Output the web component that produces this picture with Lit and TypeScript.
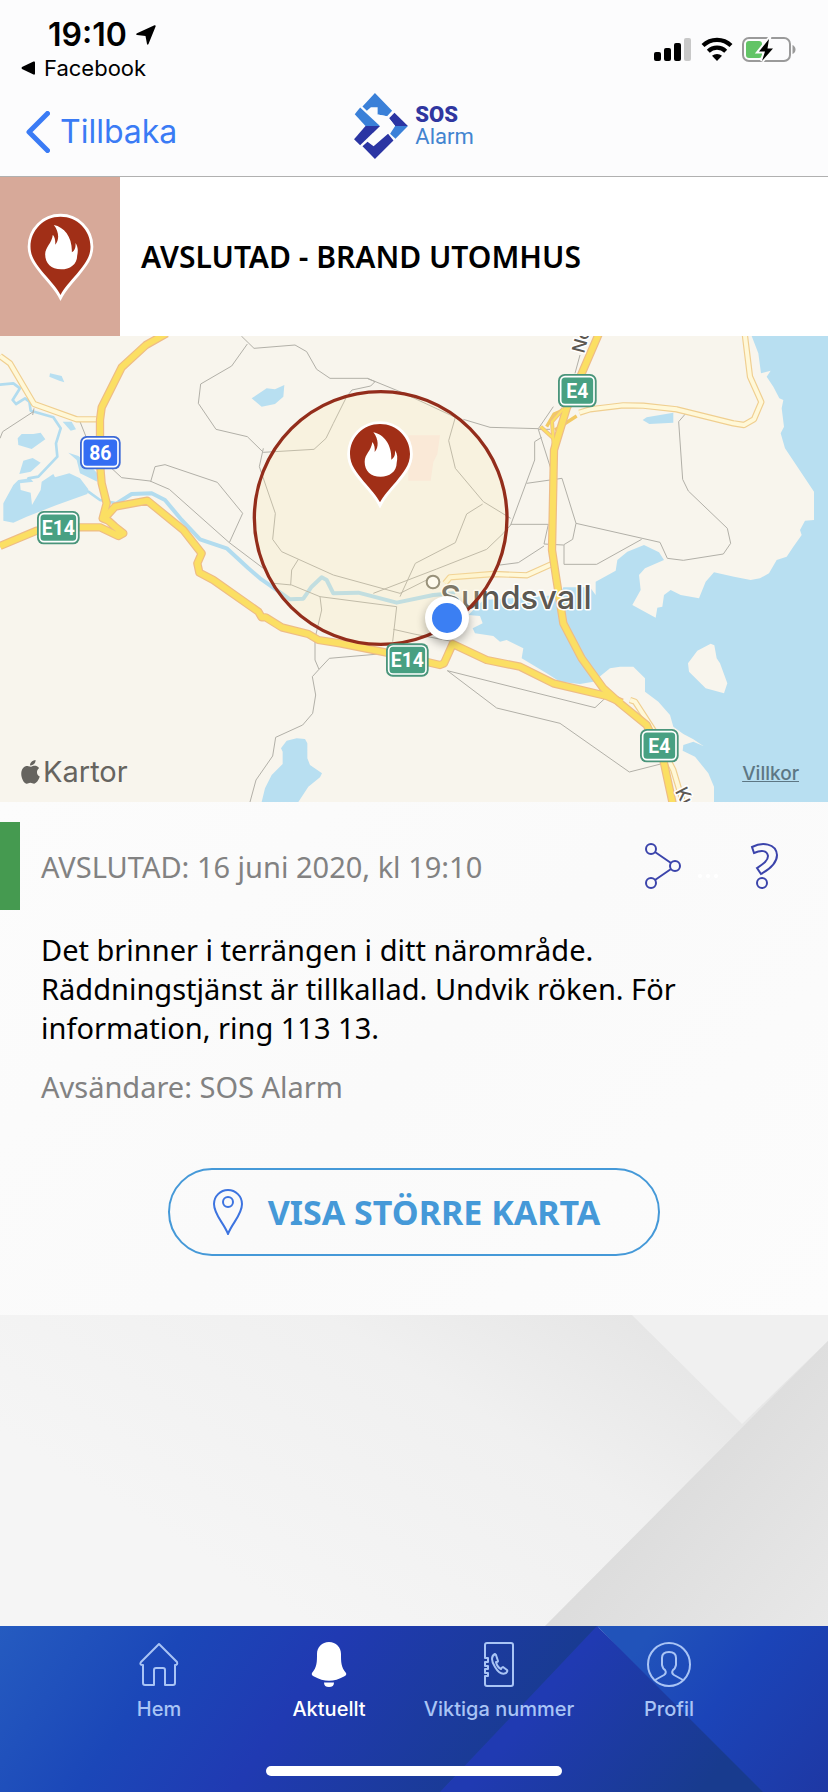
import { LitElement, html, css, svg } from "lit";
import { customElement, property } from "lit/decorators.js";

const firePin = svg`
  <path d="M100 17C50 17 10 57 10 107C10 140 30 163 52 190C72 213 90 233 100 252C110 233 128 213 148 190C170 163 190 140 190 107C190 57 150 17 100 17Z"
    fill="#a12f17" stroke="#fff" stroke-width="17" stroke-miterlimit="8" paint-order="stroke"></path>
  <path d="M80 42C112 48 136 80 134 124C144 118 146 108 145 96C153 108 153 120 150 134C150 160 128 175 102 175C72 175 54 157 54 130C54 107 74 98 77 71C84 80 85 90 84 101C97 88 96 62 80 42Z" fill="#fff"></path>`;

@customElement("status-bar")
export class StatusBar extends LitElement {
  static styles = css`
    :host { display: flex; justify-content: space-between; padding: 18px 32px 0 21px; color: #000; }
    .time { display: flex; align-items: center; gap: 9px; padding-left: 27px; font-size: 32px; line-height: 34px; font-weight: 600; }
    .app { display: flex; align-items: center; gap: 9px; margin-top: 2px; font-size: 22px; line-height: 28px; color: #000; text-decoration: none; }
    .signals { display: flex; align-items: flex-start; gap: 9px; padding-top: 19px; }
    svg { display: block; }
  `;
  render() {
    return html`
      <div>
        <div class="time">
          <span>19:10</span>
          <svg width="20" height="20" viewBox="0 0 20 20"><path d="M18.5 0.3Q20 0 19.6 1.5L12.5 19Q11.6 20.6 11 19L9.500 11L1 10Q-.6 9.200 1 8.300Z"></path></svg>
        </div>
        <a class="app" href="#facebook">
          <svg width="14" height="14" viewBox="0 0 14 14"><path d="M1 6Q0 7 1 8L12.500 13.500Q14 14 14 12.500V1.500Q14 0 12.500 .5Z"></path></svg>
          <span>Facebook</span>
        </a>
      </div>
      <div class="signals">
        <svg width="38" height="25" viewBox="0 0 38 25">
          <rect x="0" y="15" width="7" height="9" rx="2"></rect><rect x="10" y="11" width="7" height="13" rx="2"></rect>
          <rect x="20" y="6" width="7" height="18" rx="2"></rect><rect x="30" y="1" width="7" height="23" rx="2" fill="#c8c8c8"></rect>
        </svg>
        <svg width="32" height="25" viewBox="0 0 32 25" fill="none" stroke="#000" stroke-width="4.200">
          <path d="M2 8.500A20 20 0 0 1 30 8.500"></path><path d="M7.300 14.200A12.500 12.500 0 0 1 24.700 14.200"></path>
          <path d="M11 18.800A7.500 7.500 0 0 1 21 18.800L16 24Z" fill="#000" stroke="none"></path>
        </svg>
        <svg width="54" height="26" viewBox="0 0 54 26">
          <rect x="1" y="1" width="47" height="23" rx="6" fill="none" stroke="#9a9a9a" stroke-width="2"></rect>
          <rect x="4" y="4" width="16" height="17" rx="3" fill="#62c466"></rect>
          <path d="M50.500 8Q53.500 9.500 53.500 12.500T50.500 17Z" fill="#9a9a9a"></path>
          <path d="M27 2L17 14.500H23L20 24L31 11.500H25.500Z" stroke="#fcfcfc" stroke-width="4" paint-order="stroke"></path>
        </svg>
      </div>`;
  }
}

@customElement("nav-header")
export class NavHeader extends LitElement {
  static styles = css`
    :host { display: grid; grid-template-columns: 1fr auto 1fr; align-items: center; padding: 11px 26px 5px; border-bottom: 1px solid #b0b0b0; }
    .back { justify-self: start; display: flex; align-items: center; gap: 10px; padding: 0; border: 0; background: none; color: #3a7bf5; font: 400 32px/44px Inter, sans-serif; }
    .brand { display: flex; align-items: center; gap: 7px; padding-bottom: 12px; font-family: Roboto, sans-serif; }
    .name { display: flex; flex-direction: column; font-size: 22px; line-height: 22px; color: #4284d0; }
    .name strong { font-weight: 900; color: #3036a0; }
    svg { display: block; }
  `;
  render() {
    return html`
      <button class="back">
        <svg width="24" height="42" viewBox="0 0 24 42" fill="none" stroke="#3a7bf5" stroke-width="5" stroke-linecap="round" stroke-linejoin="round"><path d="M21.500 2.500L3 21L21.500 39.500"></path></svg>
        <span>Tillbaka</span>
      </button>
      <div class="brand">
        <svg width="54" height="66" viewBox="0 0 160 196">
          <g fill="#3a80d8">
            <path d="M62 0L113 53L98 69L70 64V42H50L38 53L25 40Z"></path>
            <path d="M18 43L77 98H34L2 63Z"></path>
            <path d="M108 98H160L123 136L107 121Z"></path>
          </g>
          <g fill="#2b35a3">
            <path d="M120 59L160 98H122L104 75Z"></path>
            <path d="M34 98H77L18 155L0 137Z"></path>
            <path d="M101 121L117 141L62 196L25 158L40 145L58 158Z"></path>
          </g>
          <path d="M98 69L70 64L74 92L77 98L52 126L60 145L90 121L101 121L107 121L122 98L104 75Z" fill="#fcfcfd"></path>
          <path d="M48 98H77L55 119Z" fill="#2b35a3"></path>
        </svg>
        <div class="name"><strong>SOS</strong><span>Alarm</span></div>
      </div>`;
  }
}

@customElement("event-map")
export class EventMap extends LitElement {
  static styles = css`
    :host { display: block; position: relative; }
    .map { display: block; width: 100%; height: auto; }
    .label { font-family: Inter, sans-serif; font-weight: 500; fill: #5c5852; stroke: #fff; stroke-width: 9px; paint-order: stroke; stroke-linejoin: round; }
    .city { font-size: 98px; }
    .street { font-size: 54px; }
    .code { font: 700 58px "Liberation Sans Narrow", Roboto, sans-serif; fill: #fff; text-anchor: middle; }
    .maker { position: absolute; left: 21px; bottom: 12px; display: flex; align-items: center; gap: 3px; color: #66645f; font-size: 29px; line-height: 36px; }
    .terms { position: absolute; right: 29px; bottom: 16px; color: #5d7784; font-size: 19px; line-height: 24px; font-weight: 500; }
  `;

  private shield(x: number, y: number, w: number, code: string, fill: string, edge: string) {
    return svg`
      <rect x=${x} y=${y} width=${w} height="100" rx="20" fill=${edge}></rect>
      <rect x=${x + 8} y=${y + 8} width=${w - 16} height="84" rx="13" fill=${fill} stroke="#fff" stroke-width="5"></rect>
      <text class="code" x=${x + w / 2} y=${y + 71}>${code}</text>`;
  }

  render() {
    const roads = [
      "M500 10L438 45L365 112L305 232L300 270V400L305 460L320 520L308 565L325 572L345 590L370 610L355 618L300 592H230L110 602L0 648",
      "M318 560L345 530L442 512L550 600L605 670L592 700L598 728L640 750L775 845L785 862L797 862L845 892L925 912L955 930L1020 940L1160 968L1320 1005L1332 1000L1358 942L1460 990L1560 1010L1660 1060L1820 1098L1866 1118",
      "M1797 10L1700 235L1662 360L1656 660L1668 740L1690 880L1745 985L1810 1075L1860 1120L1940 1185L1990 1290L2018 1420",
      "M1662 360L1656 275L1690 236",
      "M1660 325L1622 290",
    ];
    const pale = [
      "M0 78L30 100L102 222L230 268H290",
      "M1660 700L1580 736L1480 732L1350 742L1335 760",
      "M1738 248L1770 238L1870 226L1930 227L2030 238L2200 280L2232 285L2262 268L2284 216L2250 140L2234 10",
      "M1890 1110L1905 1115L1960 1200L2020 1320L2050 1420",
    ];
    return html`
      <svg class="map" viewBox="0 18 2484 1398" role="img" aria-label="Karta över Sundsvall">
        <defs>
          <filter id="soft" x="-50%" y="-50%" width="200%" height="200%"><feGaussianBlur stdDeviation="14"></feGaussianBlur></filter>
        </defs>
        <rect x="0" y="18" width="2484" height="1398" fill="#f8f5ed"></rect>
        <path d="M1242 316L1320 316L1312 372L1300 396L1292 452H1225V316Z" fill="#fae9e3"></path>
        <g fill="#b8dff1">
          <path d="M2255 18L2275 70L2283 130L2312 122L2300 140L2320 170L2338 205L2350 210L2345 235L2352 290L2342 310L2355 355L2442 485V570L2415 572L2400 600L2405 615L2380 650L2360 680L2330 690L2307 730L2280 745L2252 750L2202 740L2142 727L2117 755L2097 805L2042 795L2012 780L1992 795L1987 830L1972 833L1967 863L1897 825L1922 780L1917 735L1935 715L1992 690L1977 667L1932 645L1882 665L1852 690L1847 722L1787 755V795L1770 772H1690L1680 795L1450 810L1405 855L1440 858L1448 880L1418 895L1425 910L1480 918L1500 935L1520 930L1570 955L1565 985L1640 1030L1680 1055L1740 1062L1780 1055L1830 1015L1860 1010H1900L1935 1045V1085L1975 1115L2010 1155L2020 1190L2050 1212L2080 1228L2110 1248L2080 1235L2050 1245L2048 1262L2085 1280L2125 1330L2142 1370V1416H2484V18Z"></path>
          <path d="M785 1416L795 1375L815 1335L848 1302V1265L843 1255L860 1232L890 1225L915 1227L922 1240V1285L930 1305L966 1330L960 1342L925 1370L895 1416Z"></path>
          <path d="M755 205L800 175L825 178L853 165L850 200L825 222L785 230Z"></path>
          <path d="M150 130L185 138L193 157L178 152L148 140Z"></path>
          <path d="M188 275L215 275L228 298L212 302Z"></path>
          <path d="M53 325L65 312H100L122 308L136 328L95 357L55 345Z"></path>
          <path d="M70 392L98 384L122 398L92 425L58 432Z"></path>
          <path d="M205 368L235 378L262 398L292 430V455L240 430L230 390Z"></path>
          <path d="M10 520L40 465L55 450L90 445L100 455L60 460L62 480L92 488L96 525L122 480L125 455L160 432L165 442L208 430L240 445L265 478L262 492L170 525L80 560L40 578L10 572Z"></path>
          <path d="M1928 270L1940 262L2020 248L2020 278L1948 282Z"></path>
        </g>
        <path d="M2132 941L2143 946L2150 985L2160 1000L2182 1060L2172 1090L2117 1075L2067 1025L2064 1000L2092 962Z" fill="#f8f5ed"></path>
        <g fill="none" stroke="#b2dcef" stroke-linejoin="round" stroke-linecap="round">
          <path stroke-width="8" d="M0 164L40 160L60 175L38 210L48 222L75 205L88 215L92 242L160 262L182 295L168 340L172 380L115 440L85 445M265 485L300 510L350 520"></path>
          <path stroke-width="12" d="M350 520L395 492L455 490L495 510L545 570L600 628L680 655L745 715L780 745L870 808L910 806L935 770L965 742L980 750L1000 790L1075 788L1190 818L1300 795L1360 790"></path>
        </g>
        <g fill="none" stroke="#b2b0a8" stroke-width="3">
          <path d="M724 18L762 55L885 45L920 65L950 118L990 145H1102L1125 155L1112 168L1056 180L1040 200L1000 280L978 325L942 358L790 367L742 320L648 298L595 220L602 162L695 108L742 42M1102 145L1200 185L1366 262"></path>
          <path d="M0 325L8 305L100 245M102 235L98 255M240 275L262 330M335 415L365 443L450 453L508 478L688 638L728 550L652 457L495 404L465 410L452 455M688 638L790 715"></path>
          <path d="M790 355L778 410L826 550L818 628L845 665L1000 735L1200 790L1300 740M895 688L875 720L872 765M822 760L875 765L960 800L1190 830L1178 935M960 800L965 840L945 925V990L957 1018L988 985L1160 970M957 1018L937 1040L947 1095L938 1150L908 1185L827 1222L818 1278L768 1350L750 1416"></path>
          <path d="M1366 262L1346 332L1366 415L1450 515L1532 565M1390 268L1470 292L1615 296L1660 230M1650 298H1615L1660 440M1625 322L1604 335V390L1532 585L1510 610L1460 658L1310 717L1120 790M1448 522L1400 552L1366 638L1246 700L1200 800M1580 460L1686 445L1728 580L1718 628L1690 645L1632 642L1645 583H1532M1632 648L1555 698L1500 705M1692 645V703H1790L1925 628M1728 580L1980 637L2002 685L2050 691L2170 672L2192 640L2182 595L2065 483L2048 448L2036 275L2062 245M1740 75L1725 130"></path>
          <path d="M1342 1022L1785 1133L1815 1105M1342 1022L1490 1134L1680 1180L1888 1326L1990 1300M1180 898L1242 912L1360 935"></path>
        </g>
        <g fill="none" stroke-linejoin="round">
          ${pale.map((d) => svg`<path d=${d} stroke="#f0cf90" stroke-width="19"></path>`)}
          ${pale.map((d) => svg`<path d=${d} stroke="#fff8d8" stroke-width="12"></path>`)}
          <path d="M1640 290L1662 252L1690 240M1665 300L1730 258" stroke="#f2c964" stroke-width="10"></path>
          ${roads.map((d, i) => svg`<path d=${d} stroke="#eebc85" stroke-width=${i < 3 ? 25 : 12}></path>`)}
          ${roads.map((d, i) => svg`<path d=${d} stroke="#fbdf63" stroke-width=${i < 3 ? 18 : 7}></path>`)}
        </g>
        <circle cx="1299" cy="756" r="19" fill="#fff" stroke="#7d796c" stroke-width="6"></circle>
        <text class="label city" x="1320" y="836">Sundsvall</text>
        <text class="label street" transform="translate(1752 72) rotate(-75)">No</text>
        <text class="label street" transform="translate(2024 1384) rotate(62)">Ku</text>
        <circle cx="1142" cy="564" r="379" fill="#fbe9ac" fill-opacity=".22" stroke="#932d1b" stroke-width="10"></circle>
        ${this.shield(240, 318, 122, "86", "#346df3", "#3c69d6")}
        ${this.shield(111, 543, 128, "E14", "#48a082", "#4a957b")}
        ${this.shield(1158, 940, 128, "E14", "#48a082", "#4a957b")}
        ${this.shield(1674, 132, 116, "E4", "#48a082", "#4a957b")}
        ${this.shield(1920, 1197, 116, "E4", "#48a082", "#4a957b")}
        <g transform="translate(1040 265)">${firePin}</g>
        <circle cx="1341" cy="876" r="66" fill="#000" opacity=".3" filter="url(#soft)"></circle>
        <circle cx="1341" cy="864" r="66" fill="#fff"></circle>
        <circle cx="1341" cy="864" r="45" fill="#3b7ff3"></circle>
      </svg>
      <div class="maker">
        <svg width="19" height="24" viewBox="0 0 57 74" fill="#66645f"><path d="M27 17C27 8 34 1 44 0C45 9 37 17 27 17ZM30 21C36 18 47 14 55 25C46 32 46 46 57 51C54 61 47 72 40 73C35 73 33 70 28 70S20 74 16 73C7 71 0 55 0 43C0 24 13 16 22 19Z"></path></svg>
        <span>Kartor</span>
      </div>
      <a class="terms" href="#villkor">Villkor</a>`;
  }
}

@customElement("tab-item")
export class TabItem extends LitElement {
  @property() label = "";
  @property() icon = "";
  @property({ type: Boolean }) active = false;
  static styles = css`
    a { display: flex; flex-direction: column; align-items: center; gap: 10px; color: #a9c4f5; font-size: 20px; line-height: 24px; font-weight: 500; text-decoration: none; white-space: nowrap; }
    .active { color: #fff; }
    svg { display: block; fill: none; stroke: currentColor; stroke-width: 2; stroke-linejoin: round; stroke-linecap: round; }
    .solid { fill: currentColor; stroke: none; }
  `;
  private glyphs: Record<string, unknown> = {
    home: svg`<path d="M22 2L40 20Q41 23 38 23V41Q38 43 36 43H28V28Q28 26 26 26H19Q17 26 17 28V43H8Q6 43 6 41V23Q2 23 4 20Z"></path>`,
    bell: svg`<g class="solid"><path d="M22 0C29 0 34 5 34 12C34 20 34 25 39 31Q40 33 37 34.500Q22 43 7 34.500Q4 33 5 31C10 25 10 20 10 12C10 5 15 0 22 0Z"></path><path d="M17 40.500H27Q27 45 22 45T17 40.500Z"></path></g>`,
    book: svg`<path d="M8 13V3Q8 1 10 1H34Q36 1 36 3V42Q36 44 34 44H10Q8 44 8 42V34H11V31H8V27H11V24H8V20H11V16H8Z"></path><path d="M18 12C14 14 14 19 18 25C21 30 25 33 29 31Q31 29 30 28L26 25Q25 25 24 27Q20 25 19 20Q21 20 21 19L19 13Z"></path>`,
    person: svg`<ellipse cx="22" cy="22.500" rx="21" ry="21.500"></ellipse><path d="M8 38L17 33Q20 31 18 28Q16 27 15 23V16C15 11 18 10 22 10S29 11 29 16V23Q28 27 26 28Q24 31 27 33L36 38"></path>`,
  };
  render() {
    return html`<a class=${this.active ? "active" : ""} href="#${this.icon}">
      <svg width="44" height="45" viewBox="0 0 44 45">${this.glyphs[this.icon]}</svg><span>${this.label}</span></a>`;
  }
}

@customElement("app-root")
export class AppRoot extends LitElement {
  static styles = css`
    :host { display: flex; flex-direction: column; min-height: 100vh; background: #fcfcfd; font-family: Inter, sans-serif; color: #000; }
    svg { display: block; }
    .event { display: flex; align-items: stretch; background: #fff; font-family: "Noto Sans", sans-serif; }
    .badge { display: flex; align-items: center; justify-content: center; width: 120px; height: 159px; background: #d7a999; }
    .event h1 { margin: 0; align-self: center; padding-left: 21px; font-size: 30px; line-height: 40px; font-weight: 600; }
    .details { display: flex; flex-direction: column; padding: 20px 0 59px; background: linear-gradient(135deg, #fcfcfc, #fafafa 50%, #fcfcfc); font-family: "Noto Sans", sans-serif; font-size: 29px; line-height: 39px; }
    .state { display: flex; align-items: center; height: 88px; padding-right: 47px; border-left: 20px solid #459a50; color: #828282; }
    .state time { flex: 1; padding-left: 21px; }
    .tools { display: flex; align-items: center; gap: 12px; }
    .tool { padding: 0; border: 0; background: none; }
    .message { margin: 20px 60px 0 41px; }
    .sender { margin: 20px 60px 0 41px; color: #828282; }
    .more { align-self: center; display: flex; align-items: center; gap: 24px; height: 88px; margin-top: 62px; padding: 0 58px 0 42px; border: 2px solid #4599d8; border-radius: 44px; background: none; color: #4599d8; font: 700 34px/44px "Noto Sans", sans-serif; }
    .backdrop { flex: 1; min-height: 120px; overflow: hidden; position: relative; }
    .art { position: absolute; inset: 0; width: 100%; height: 100%; }
    .tabs { position: relative; display: flex; flex-direction: column; justify-content: space-between; height: 166px; overflow: hidden; }
    .items { position: relative; display: grid; grid-template-columns: repeat(4, 1fr); padding: 16px 74px 0; }
    .handle { position: relative; align-self: center; width: 296px; height: 10px; margin-bottom: 16px; border-radius: 5px; background: #fff; }
  `;
  render() {
    return html`
      <status-bar></status-bar>
      <nav-header></nav-header>
      <section class="event">
        <div class="badge"><svg width="67" height="92" viewBox="0 0 200 276">${firePin}</svg></div>
        <h1>AVSLUTAD - BRAND UTOMHUS</h1>
      </section>
      <event-map></event-map>
      <section class="details">
        <div class="state">
          <time datetime="2020-06-16T19:10">AVSLUTAD: 16 juni 2020, kl 19:10</time>
          <div class="tools">
            <button class="tool" aria-label="Dela">
              <svg width="40" height="48" viewBox="0 0 40 48" fill="none" stroke="#3b44ab" stroke-width="2"><circle cx="8" cy="7" r="5"></circle><circle cx="32" cy="24" r="5"></circle><circle cx="8" cy="41" r="5"></circle><path d="M12 10L28 21M12 38L28 27"></path></svg>
            </button>
            <svg width="24" height="48" viewBox="0 0 24 48" fill="#fff"><circle cx="5" cy="34" r="2"></circle><circle cx="13" cy="34" r="2"></circle><circle cx="21" cy="34" r="2"></circle></svg>
            <button class="tool" aria-label="Hjälp">
              <svg width="50" height="48" viewBox="14 0 50 48" fill="none" stroke="#3b44ab" stroke-width="2"><path d="M35 5C45 0 59 1 60 13C60 20 53 27 44 32L40 26C46 22 51 19 51 14C50 8 44 8 37 11Z"></path><circle cx="45" cy="41" r="5"></circle></svg>
            </button>
          </div>
        </div>
        <p class="message">Det brinner i terrängen i ditt närområde. Räddningstjänst är tillkallad. Undvik röken. För information, ring 113 13.</p>
        <p class="sender">Avsändare: SOS Alarm</p>
        <button class="more">
          <svg width="32" height="46" viewBox="0 0 32 46" fill="none" stroke="#3d74e0" stroke-width="2"><path d="M16 45C12 34 2 26 2 15A14 14 0 0 1 30 15C30 26 20 34 16 45Z"></path><circle cx="16" cy="13" r="5"></circle></svg>
          <span>VISA STÖRRE KARTA</span>
        </button>
      </section>
      <div class="backdrop">
        <svg class="art" viewBox="0 0 828 311" preserveAspectRatio="none">
          <defs>
            <linearGradient id="base" x1="0" y1=".6" x2="1" y2="0"><stop offset=".1" stop-color="#f5f5f5"></stop><stop offset=".55" stop-color="#f0f0f0"></stop><stop offset=".85" stop-color="#e5e5e5"></stop></linearGradient>
            <linearGradient id="fold" x1=".3" y1=".4" x2="1" y2="1"><stop offset="0" stop-color="#dadada"></stop><stop offset="1" stop-color="#e8e8e8"></stop></linearGradient>
          </defs>
          <path d="M0 0H828V311H0Z" fill="url(#base)"></path>
          <path d="M632 0H828V26L742 109Z" fill="#f0f0f0"></path>
          <path d="M828 26V311H545Z" fill="url(#fold)"></path>
        </svg>
      </div>
      <nav class="tabs">
        <svg class="art" viewBox="0 0 828 166" preserveAspectRatio="none">
          <defs>
            <linearGradient id="left" gradientUnits="userSpaceOnUse" x1="0" y1="0" x2="430" y2="290"><stop offset="0" stop-color="#255bc0"></stop><stop offset=".3" stop-color="#1b47b8"></stop><stop offset=".55" stop-color="#203ab2"></stop><stop offset="1" stop-color="#183b8e"></stop></linearGradient>
            <linearGradient id="mid" gradientUnits="userSpaceOnUse" x1="560" y1="50" x2="700" y2="166"><stop offset="0" stop-color="#203ab2"></stop><stop offset="1" stop-color="#183b8e"></stop></linearGradient>
            <linearGradient id="right" gradientUnits="userSpaceOnUse" x1="640" y1="20" x2="828" y2="166"><stop offset="0" stop-color="#2153ba"></stop><stop offset=".4" stop-color="#1b44b8"></stop><stop offset="1" stop-color="#1e38a4"></stop></linearGradient>
          </defs>
          <path d="M0 0H600L441 166H0Z" fill="url(#left)"></path>
          <path d="M597 0L770 166H440Z" fill="url(#mid)"></path>
          <path d="M597 0H828V166H763Z" fill="url(#right)"></path>
        </svg>
        <div class="items">
          <tab-item label="Hem" icon="home"></tab-item>
          <tab-item label="Aktuellt" icon="bell" active></tab-item>
          <tab-item label="Viktiga nummer" icon="book"></tab-item>
          <tab-item label="Profil" icon="person"></tab-item>
        </div>
        <div class="handle"></div>
      </nav>`;
  }
}
